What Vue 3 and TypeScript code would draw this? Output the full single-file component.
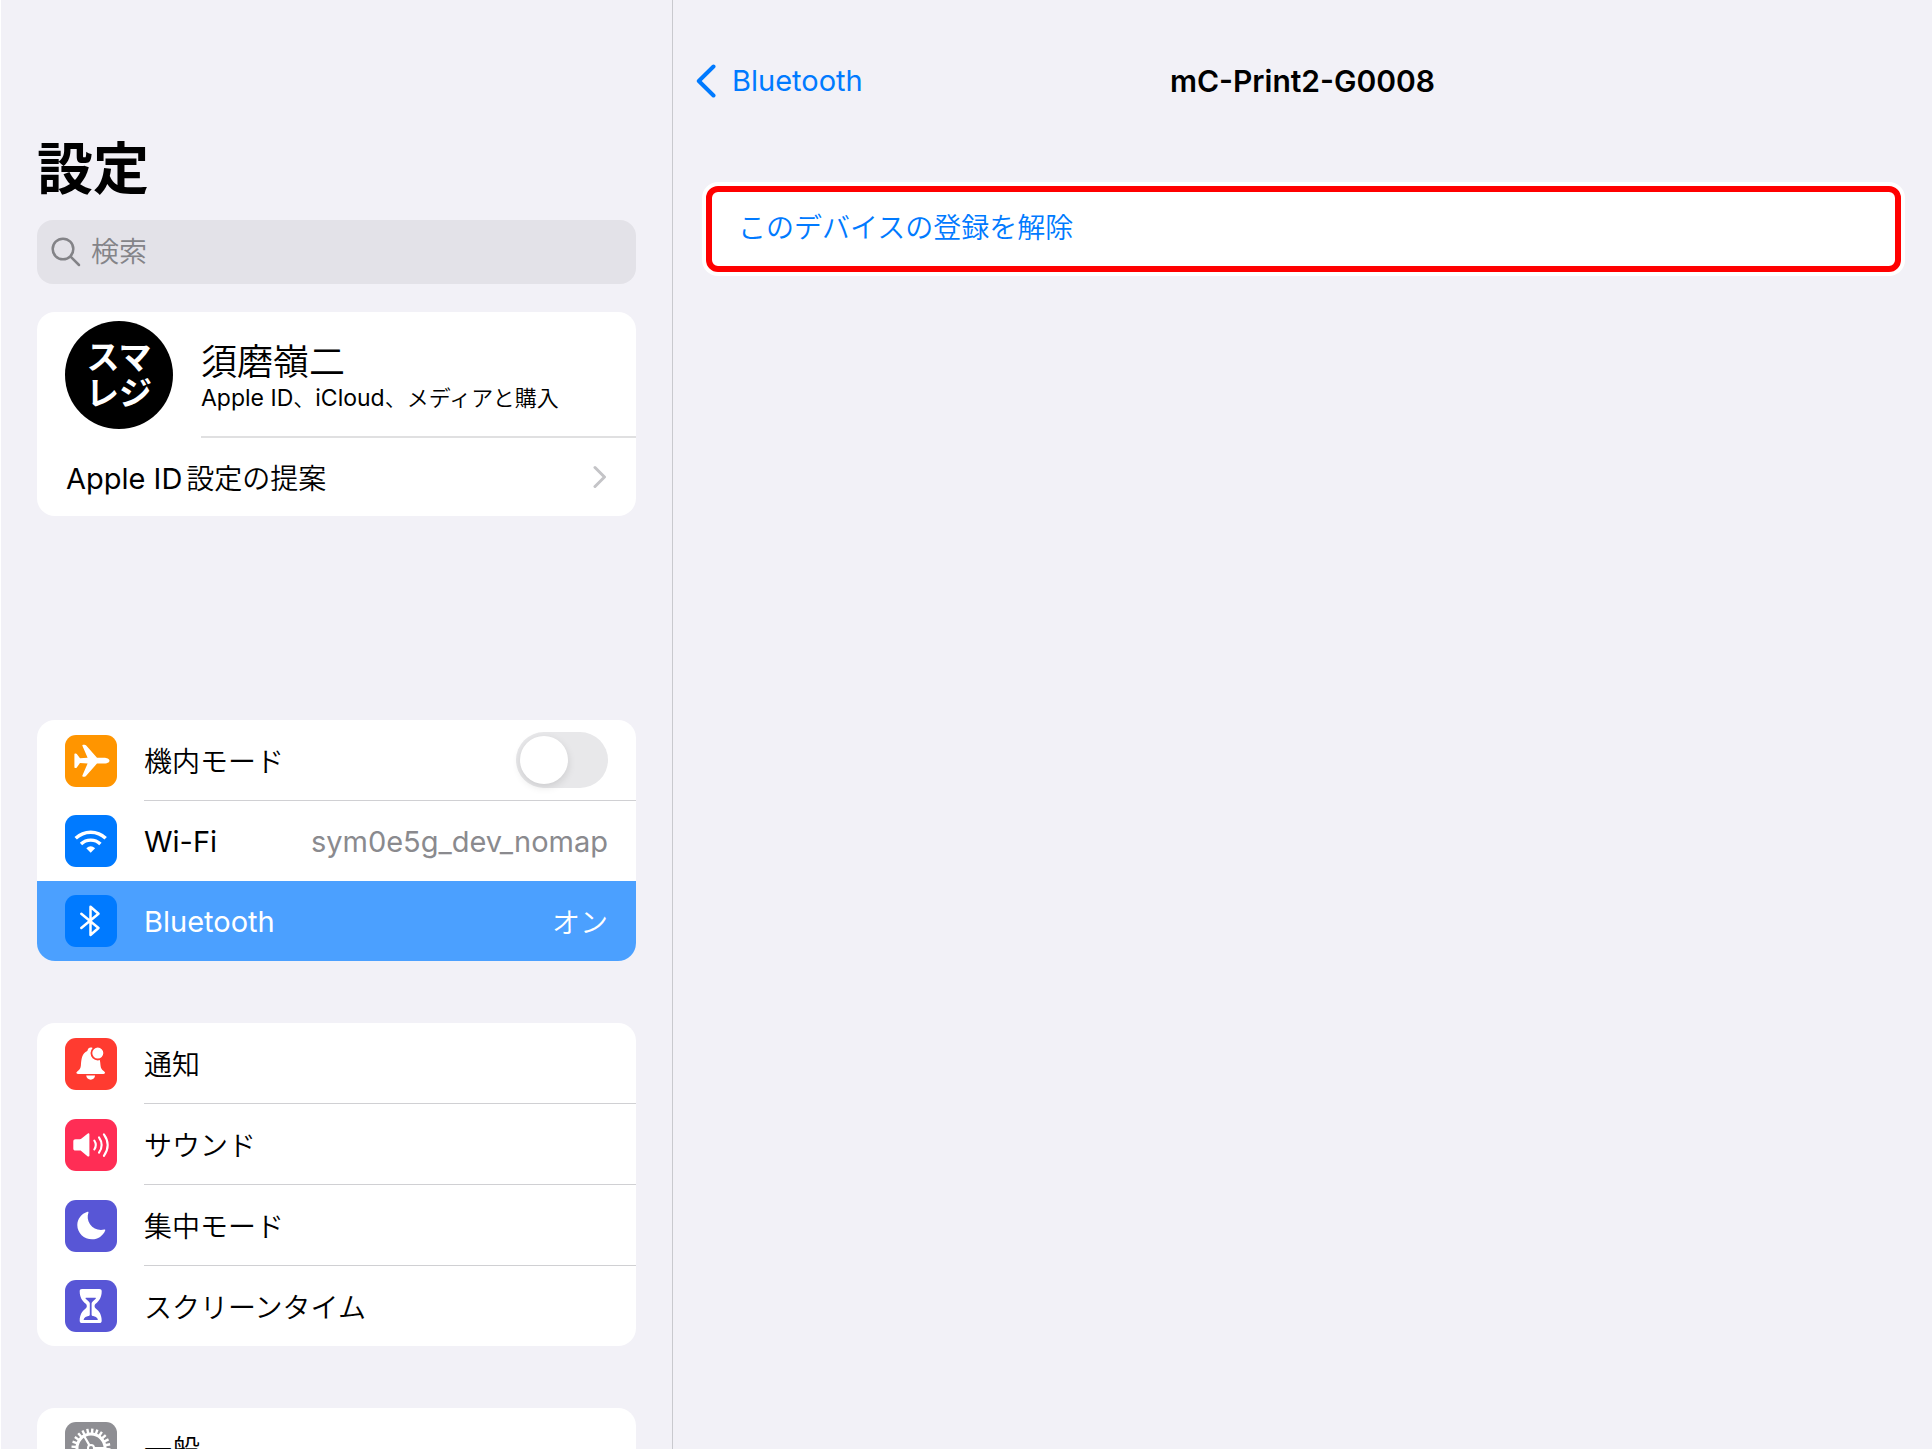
<script setup lang="ts">
import { ref } from 'vue'

interface SettingRow {
  id: string
  label: string
  icon: string
  color: string
  latin?: boolean
  value?: string
  valueLatin?: boolean
  toggle?: boolean
  selected?: boolean
}

const airplaneMode = ref(false)
const query = ref('')

const groups: SettingRow[][] = [
  [
    { id: 'airplane', label: '機内モード', icon: 'airplane', color: '#ff9500', toggle: true },
    { id: 'wifi', label: 'Wi-Fi', icon: 'wifi', color: '#007aff', latin: true, value: 'sym0e5g_dev_nomap', valueLatin: true },
    { id: 'bluetooth', label: 'Bluetooth', icon: 'bluetooth', color: '#007aff', latin: true, value: 'オン', selected: true },
  ],
  [
    { id: 'notice', label: '通知', icon: 'bell', color: '#ff3b30' },
    { id: 'sound', label: 'サウンド', icon: 'speaker', color: '#ff2d55' },
    { id: 'focus', label: '集中モード', icon: 'moon', color: '#5856d6' },
    { id: 'screentime', label: 'スクリーンタイム', icon: 'hourglass', color: '#5856d6' },
  ],
  [{ id: 'general', label: '一般', icon: 'gear', color: '#8e8e93' }],
]

const teeth = Array.from({ length: 24 }, (_, i) => i * 15)
</script>

<template>
  <div class="screen">
    <aside class="sidebar">
      <h1 class="title">設定</h1>

      <label class="search">
        <svg class="search-icon" viewBox="0 0 30 30" aria-hidden="true">
          <circle cx="12" cy="12" r="10.3" />
          <path d="M19.6 19.6L28 28" />
        </svg>
        <input v-model="query" type="text" placeholder="検索" aria-label="検索" />
      </label>

      <section class="card account">
        <a href="#account" class="profile">
          <span class="avatar">スマレジ</span>
          <span class="profile-text">
            <span class="name">須磨嶺二</span>
            <span class="sub"><span class="sub-latin">Apple ID</span>、<span class="sub-latin">iCloud</span>、メディアと購入</span>
          </span>
        </a>
        <a href="#suggestions" class="suggestion">
          <span><span class="latin lead">Apple ID</span>設定の提案</span>
          <svg class="chevron" viewBox="0 0 14 24" aria-hidden="true"><path d="M2 2.500L11.500 12L2 21.500" /></svg>
        </a>
      </section>

      <nav v-for="(rows, g) in groups" :key="g" class="card group">
        <component
          :is="row.toggle ? 'label' : 'a'"
          v-for="row in rows"
          :key="row.id"
          :href="row.toggle ? undefined : '#' + row.id"
          class="row"
          :class="{ selected: row.selected }"
        >
          <svg class="icon" viewBox="0 0 52 52" :style="{ background: row.color }" aria-hidden="true">
            <path
              v-if="row.icon === 'airplane'"
              fill="#fff"
              d="M44.500 25.700c0-1.700-2.800-2.900-5.500-2.900h-7L21.200 10.600c-.5-.6-1-.9-1.700-.9h-1.400c-.6 0-.9.500-.7 1.100l5.200 12-7.600.5-3.200-4.300c-.3-.4-.6-.6-1.100-.6h-.6c-.4 0-.7.300-.7.700v13.200c0 .4.300.7.700.7h.6c.5 0 .8-.2 1.100-.6l3.200-4.300 7.600.5-5.200 12c-.2.600.1 1.100.7 1.100h1.400c.7 0 1.200-.3 1.700-.9L32 28.600h7c2.700 0 5.500-1.200 5.500-2.900z"
            />
            <g v-else-if="row.icon === 'wifi'" fill="none" stroke="#fff" stroke-width="3.400">
              <path d="M10.700 23.300a21.500 21.500 0 0 1 30 0" />
              <path d="M16 29a14 14 0 0 1 19.400 0" />
              <path d="M21.300 33.200q4.400-4 8.800 0l-4.400 4.500z" fill="#fff" stroke="none" />
            </g>
            <path
              v-else-if="row.icon === 'bluetooth'"
              fill="none"
              stroke="#fff"
              stroke-width="2.500"
              stroke-linejoin="round"
              stroke-linecap="round"
              d="M16.300 18.800L33.500 33L25.500 40V11.700L33.500 18.800L16.300 33"
            />
            <g v-else-if="row.icon === 'bell'">
              <path
                fill="#fff"
                d="M25.700 9.600c1.500 0 2.500.6 3.300 1.600l5.500 9.500c.6 2 .9 4.400 1 6.500.2 3 1.400 4.200 3.200 5.900.8.700 1.300 1.200 1.300 1.700 0 .7-.6 1.200-1.500 1.200H13c-1 0-1.600-.5-1.600-1.200 0-.5.600-1 1.400-1.700 1.800-1.700 2.900-2.900 3.100-5.900.4-6.500 1.200-12 6.400-14.300.6-2.100 1.700-3.300 3.400-3.300z"
              />
              <path fill="#fff" d="M21.200 37.600h8.900c-.3 2.500-2 4.100-4.400 4.100s-4.200-1.600-4.500-4.100z" />
              <circle cx="32.800" cy="15.100" r="6.400" fill="#fff" stroke="#ff3b30" stroke-width="1.800" />
            </g>
            <g v-else-if="row.icon === 'speaker'" fill="none" stroke="#fff" stroke-linecap="round" stroke-width="2.100">
              <path
                fill="#fff"
                stroke="none"
                d="M10.500 20.300h4.500c.5 0 .8-.2 1.200-.5l6-4.900c.5-.4.900-.6 1.200-.6.700 0 1 .5 1 1.100v21.200c0 .6-.4 1-1 1-.4 0-.8-.2-1.200-.6l-6-5c-.4-.3-.7-.4-1.200-.4h-4.500c-1.400 0-2.200-.8-2.200-2.200v-6.900c0-1.400.8-2.200 2.200-2.200z"
              />
              <path d="M29.300 21.500q3 4.500 0 9" />
              <path d="M34 18.300q5.300 7.700 0 15.400" />
              <path d="M38.900 15.400q7.600 10.700 0 21.400" />
            </g>
            <path
              v-else-if="row.icon === 'moon'"
              fill="#fff"
              d="M22.500 11.800c.7-.3 1.200.2.900.9-1.200 3.300-1 7.700 1.600 11.500 3.200 4.700 9 6.700 14.300 5.300.8-.2 1.200.3.900 1-2.100 5.300-7.200 8.800-13.100 8.800-8.200 0-14.800-6.400-14.800-14.400 0-5.800 3.900-11.100 10.200-13.100z"
            />
            <g v-else-if="row.icon === 'hourglass'">
              <path
                fill="#fff"
                d="M17 9h17.400c1.500 0 2.300.9 2.300 2.300 0 6-2.500 9.700-5.700 12.100-1.100.8-1.400 1.600-1.400 2.600s.3 1.900 1.400 2.700c3.200 2.300 5.700 6 5.700 12 0 1.400-.8 2.300-2.300 2.300H17c-1.500 0-2.300-.9-2.300-2.300 0-6 2.500-9.700 5.700-12 1.100-.8 1.400-1.700 1.400-2.700s-.3-1.800-1.400-2.600c-3.200-2.400-5.700-6.100-5.700-12.100C14.700 9.900 15.500 9 17 9z"
              />
              <path
                fill="#5856d6"
                d="M21.300 17.800h8.800c.7 0 1 .5.600 1l-3 2.800c-.7.600-1.100 1.100-1.100 2v10.900c0 1 .5 1.400 1.500 1.600 2 .4 4 1.600 4.600 2.800.3.600 0 1-.6 1H19.400c-.7 0-.9-.4-.6-1 .6-1.200 2.500-2.400 4.500-2.800 1-.2 1.500-.6 1.500-1.600V23.600c0-.9-.4-1.400-1.100-2l-3-2.800c-.4-.5-.1-1 .6-1z"
              />
            </g>
            <g v-else fill="none" stroke="#fff">
              <circle cx="26" cy="26" r="14" stroke-width="3" />
              <path v-for="a in teeth" :key="a" d="M26 6.500v5" stroke-width="2.400" :transform="`rotate(${a + 4} 26 26)`" />
              <path d="M24.500 23.400L18.500 13M29 26h11.500M24.500 28.600L18.500 39" stroke-width="2.200" />
              <circle cx="26" cy="26" r="3" stroke-width="2" />
            </g>
          </svg>
          <span class="row-body">
            <span :class="{ latin: row.latin }">{{ row.label }}</span>
            <input v-if="row.toggle" v-model="airplaneMode" class="switch" type="checkbox" role="switch" />
            <span v-else-if="row.value" class="value" :class="{ latin: row.valueLatin }">{{ row.value }}</span>
          </span>
        </component>
      </nav>
    </aside>

    <main class="detail">
      <header class="bar">
        <a href="#bluetooth" class="back latin">
          <svg class="back-icon" viewBox="0 0 20 34" aria-hidden="true"><path d="M17.500 2.500L2.800 17L17.500 31.500" /></svg>
          Bluetooth
        </a>
        <h2 class="device">mC-Print2-G0008</h2>
      </header>
      <div class="action">
        <button type="button" class="forget">このデバイスの登録を解除</button>
      </div>
    </main>
  </div>
</template>

<style>
body {
  margin: 0;
  background: #f2f1f7;
}
</style>

<style scoped>
.screen {
  display: grid;
  grid-template-columns: minmax(0, 673fr) minmax(0, 1259fr);
  height: 100vh;
  overflow: hidden;
  background: #f2f1f7;
  color: #000;
  font-family: Inter, 'Noto Sans CJK JP', sans-serif;
  font-size: 28px;
  font-weight: 350;
}

.screen * {
  box-sizing: border-box;
}

a {
  color: inherit;
  text-decoration: none;
}

.latin {
  font-size: 29px;
  font-weight: 400;
}

.lead {
  margin-right: 4px;
}

.sidebar {
  padding: 137px 36px 0;
  border-left: 1px solid #fff;
  border-right: 1px solid #c9c9ce;
  overflow: hidden;
}

.title {
  margin: 0 0 19px;
  font-size: 56px;
  font-weight: 700;
  line-height: 64px;
}

.search {
  display: flex;
  align-items: center;
  gap: 10px;
  height: 64px;
  margin-bottom: 28px;
  padding: 0 14px;
  border-radius: 16px;
  background: #e3e2e8;
}

.search-icon {
  width: 30px;
  height: 30px;
  fill: none;
  stroke: #838387;
  stroke-width: 2.500;
  stroke-linecap: round;
}

.search input {
  flex: 1;
  min-width: 0;
  padding: 0;
  border: 0;
  outline: 0;
  background: transparent;
  font: inherit;
}

.search input::placeholder {
  color: #848488;
  opacity: 1;
}

.card {
  overflow: hidden;
  border-radius: 18px;
  background: #fff;
}

.account {
  margin-bottom: 204px;
}

.profile {
  display: flex;
  gap: 28px;
  padding-left: 28px;
}

.avatar {
  width: 108px;
  height: 108px;
  margin: 9px 0;
  padding: 18px 20px;
  border-radius: 50%;
  background: #000;
  color: #fff;
  font-size: 33px;
  font-weight: 700;
  line-height: 36px;
  text-align: center;
  word-break: break-all;
}

.profile-text {
  flex: 1;
  display: flex;
  flex-direction: column;
  justify-content: center;
  padding-top: 7px;
  border-bottom: 2px solid #e0e0e1;
}

.name {
  font-size: 36px;
  line-height: 40px;
}

.sub {
  font-size: 22px;
  line-height: 32px;
}

.sub-latin {
  font-size: 23px;
  font-weight: 400;
}

.suggestion {
  display: flex;
  align-items: center;
  justify-content: space-between;
  height: 78px;
  padding: 0 29px;
}

.chevron {
  width: 14px;
  height: 24px;
  fill: none;
  stroke: #c4c4c7;
  stroke-width: 3;
  stroke-linecap: round;
  stroke-linejoin: round;
}

.group {
  margin-bottom: 62px;
}

.row {
  display: flex;
  align-items: center;
  gap: 27px;
  padding-left: 28px;
}

.icon {
  flex: none;
  width: 52px;
  height: 52px;
  border-radius: 11px;
}

.row-body {
  flex: 1;
  display: flex;
  align-items: center;
  justify-content: space-between;
  height: 81px;
  padding-right: 28px;
  border-bottom: 1px solid #d0d0d3;
}

.row:last-child .row-body {
  height: 80px;
  border-bottom: 0;
}

.row:has(+ .selected) .row-body {
  height: 80px;
  border-bottom: 0;
}

.value {
  color: #8a8a8e;
}

.selected {
  background: #4ba0ff;
  color: #fff;
}

.selected .value {
  color: #fff;
}

.switch {
  appearance: none;
  width: 92px;
  height: 56px;
  margin: 0;
  padding: 4px;
  border-radius: 28px;
  background: #e8e8ea;
}

.switch::before {
  content: '';
  display: block;
  width: 48px;
  height: 48px;
  border-radius: 50%;
  background: #fff;
  box-shadow: 0 3px 8px rgba(0, 0, 0, 0.12);
}

.switch:checked {
  background: #34c759;
}

.switch:checked::before {
  margin-left: auto;
}

.bar {
  display: grid;
  grid-template-columns: 1fr auto 1fr;
  align-items: center;
  height: 161px;
  padding: 0 23px;
}

.back {
  display: flex;
  align-items: center;
  gap: 16px;
  color: #007aff;
}

.back-icon {
  width: 20px;
  height: 34px;
  fill: none;
  stroke: #007aff;
  stroke-width: 4;
  stroke-linecap: round;
  stroke-linejoin: round;
}

.device {
  margin: 0;
  font-size: 30px;
  font-weight: 600;
}

.action {
  margin: 21px 27px 0 29px;
  padding: 4px;
  border-radius: 16px;
  background: #fff;
}

.forget {
  display: block;
  width: 100%;
  height: 86px;
  padding: 0 26px 6px;
  border: 6px solid #f00;
  border-radius: 12px;
  background: #fff;
  color: #007aff;
  font: inherit;
  text-align: left;
}
</style>
